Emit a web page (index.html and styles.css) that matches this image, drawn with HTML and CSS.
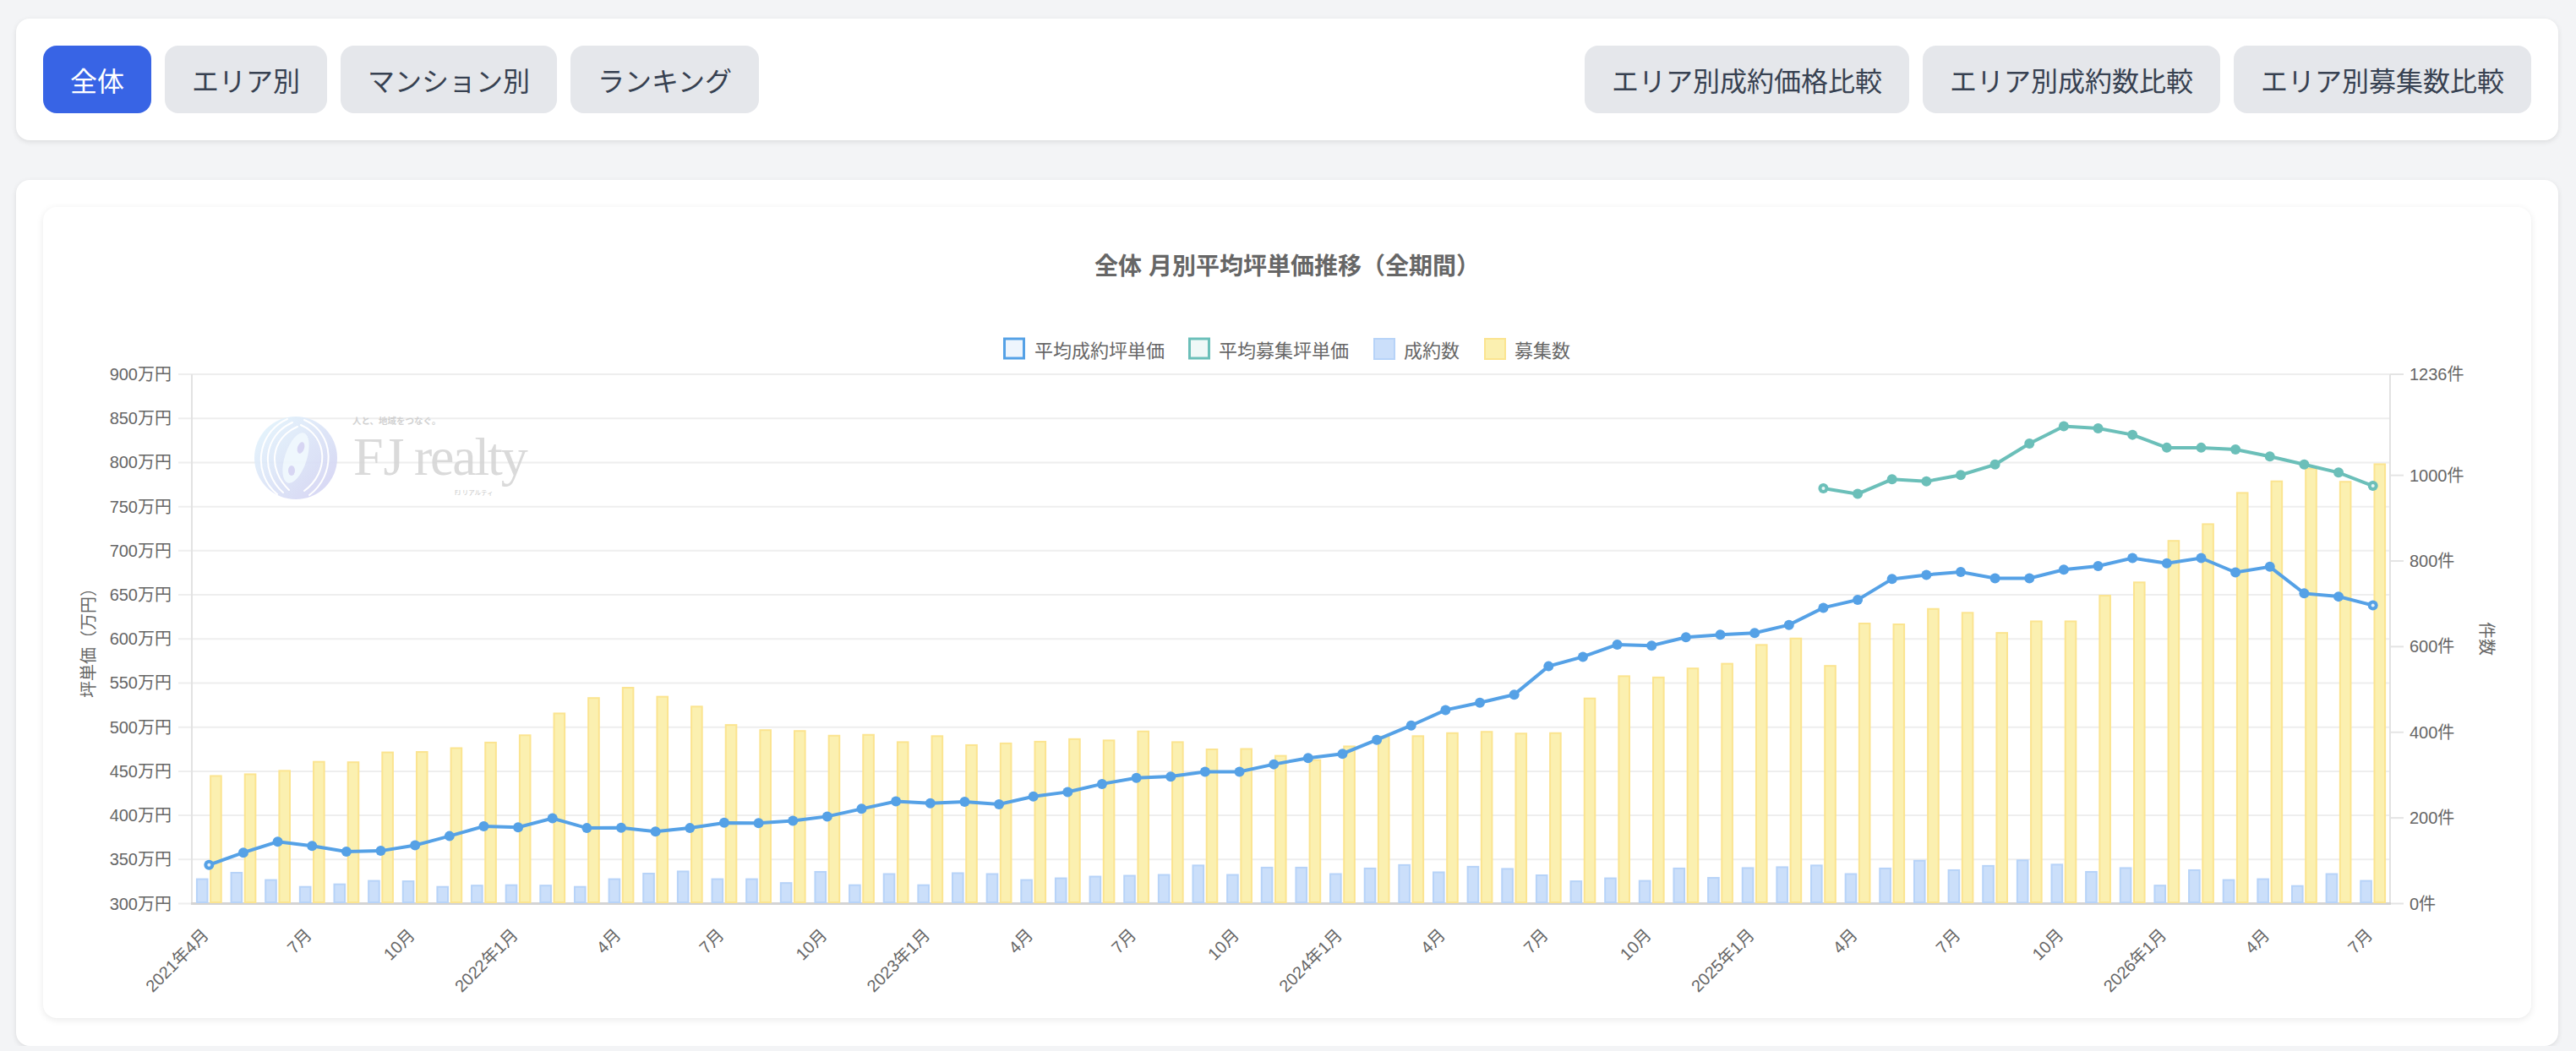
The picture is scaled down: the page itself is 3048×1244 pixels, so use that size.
FILE: index.html
```html
<!DOCTYPE html>
<html lang="ja">
<head>
<meta charset="utf-8">
<title>全体 月別平均坪単価推移（全期間）</title>
<link rel="stylesheet" href="styles.css">
</head>
<body>
<div class="page">
  <nav class="toolbar">
    <div class="btn-group">
      <button class="btn active">全体</button>
      <button class="btn">エリア別</button>
      <button class="btn">マンション別</button>
      <button class="btn">ランキング</button>
    </div>
    <div class="btn-group">
      <button class="btn">エリア別成約価格比較</button>
      <button class="btn">エリア別成約数比較</button>
      <button class="btn">エリア別募集数比較</button>
    </div>
  </nav>

  <section class="panel">
    <div class="chart-card">
      <svg id="chart" class="chart" viewBox="0 0 2944 960" xmlns="http://www.w3.org/2000/svg">
        <defs>
          <linearGradient id="logoGrad" x1="0" y1="0" x2="1" y2="1">
            <stop offset="0" stop-color="#e4f7fd"/>
            <stop offset="1" stop-color="#d2d0f2"/>
          </linearGradient>
        </defs>

        <text class="chart-title" x="1472" y="70">全体 月別平均坪単価推移（全期間）</text>

        <g class="legend">
          <rect x="1137.5" y="156" width="23" height="23" fill="#eef5fd" stroke="#55a1e6" stroke-width="3"/>
          <text class="legend-text" x="1173" y="168">平均成約坪単価</text>
          <rect x="1356.5" y="156" width="23" height="23" fill="#eff8f7" stroke="#6bbfb9" stroke-width="3"/>
          <text class="legend-text" x="1391" y="168">平均募集坪単価</text>
          <rect x="1575" y="156" width="24" height="24" fill="#cbdffa" stroke="#b7d3f8" stroke-width="2"/>
          <text class="legend-text" x="1610" y="168">成約数</text>
          <rect x="1706" y="156" width="24" height="24" fill="#fbf0b0" stroke="#fbe490" stroke-width="2"/>
          <text class="legend-text" x="1741" y="168">募集数</text>
        </g>

        <text class="axis-title" transform="translate(52 511) rotate(-90)">坪単価（万円）</text>
        <text class="axis-title" transform="translate(2892 511) rotate(90)">件数</text>

        <g id="grid"></g>

        <g class="logo" opacity="0.9">
          <g transform="translate(299 297)">
            <circle r="49" fill="url(#logoGrad)"/>
            <path d="M-22 43 C-52 18 -46 -30 -10 -46" class="logo-stroke"/>
            <path d="M-15 41 C-43 16 -38 -27 -4 -42" class="logo-stroke"/>
            <path d="M-8 38 C-34 13 -30 -23 2 -37" class="logo-stroke"/>
            <path d="M10 -45 C46 -30 48 20 16 44" class="logo-stroke"/>
            <path d="M6 -39 C38 -25 40 17 10 39" class="logo-stroke"/>
            <ellipse cx="0" cy="0" rx="13" ry="31" transform="rotate(18)" fill="#eef7fd"/>
            <ellipse cx="6" cy="-12" rx="4" ry="7" transform="rotate(18 6 -12)" fill="#d3d2f2"/>
            <ellipse cx="-5" cy="15" rx="4" ry="6" fill="#d3d2f2"/>
          </g>
          <text class="logo-tag" x="366" y="256.5">人と、地域をつなぐ。</text>
          <text class="logo-main" x="367" y="317">FJ</text>
          <text class="logo-main logo-word" x="439" y="317">realty</text>
          <text class="logo-sub" x="487" y="341">FJ リアルティ</text>
        </g>

        <g id="bars"></g>
        <g id="lines"></g>
        <g id="xlabels"></g>
      </svg>
    </div>
  </section>
</div>
<script src="script.js"></script>
</body>
</html>
```

FILE: styles.css
```css
* { box-sizing: border-box; }
html, body { margin: 0; }
body {
  background: #f3f4f6;
  font-family: "Noto Sans CJK JP", "Noto Sans", sans-serif;
}
.page { padding: 22px 21px 0 19px; }

.toolbar {
  background: #fff;
  border-radius: 16px;
  box-shadow: 0 2px 6px rgba(0, 0, 0, 0.1);
  padding: 32px;
  display: flex;
  justify-content: space-between;
}
.btn-group { display: flex; gap: 16px; }
.btn {
  height: 80px;
  padding: 0 32px;
  border: 0;
  border-radius: 16px;
  background: #e5e7eb;
  color: #374151;
  font-family: "Noto Sans CJK JP", sans-serif;
  font-size: 32px;
  line-height: 48px;
  cursor: pointer;
}
.btn.active { background: #3864e5; color: #fff; }

.panel {
  margin-top: 47px;
  background: #fff;
  border-radius: 16px;
  box-shadow: 0 2px 6px rgba(0, 0, 0, 0.1);
  padding: 32px 32px 33px;
}
.chart-card {
  background: #fff;
  border-radius: 16px;
  box-shadow: 0 2px 8px rgba(0, 0, 0, 0.09);
  overflow: hidden;
}
.chart { display: block; width: 100%; height: 960px; }

.chart-title {
  font-family: "Liberation Sans", "Noto Sans CJK JP", sans-serif;
  font-size: 28px;
  font-weight: 700;
  fill: #666;
  text-anchor: middle;
  dominant-baseline: central;
}
.legend-text {
  font-family: "Noto Sans CJK JP", sans-serif;
  font-size: 22px;
  fill: #666;
  dominant-baseline: central;
}
.axis-title {
  font-family: "Noto Sans CJK JP", sans-serif;
  font-size: 20px;
  fill: #666;
  text-anchor: middle;
  dominant-baseline: central;
}
.tick {
  font-family: "Liberation Sans", "Noto Sans CJK JP", sans-serif;
  font-size: 20px;
  fill: #666;
  dominant-baseline: central;
}
.tick-left { text-anchor: end; }
.tick-x { text-anchor: end; }

.logo-stroke { fill: none; stroke: #fff; stroke-width: 2; stroke-linecap: round; }
.logo-tag {
  font-family: "Noto Sans CJK JP", sans-serif;
  font-size: 10.5px;
  font-weight: 700;
  fill: #cdcdcd;
}
.logo-main {
  font-family: "Liberation Serif", serif;
  font-size: 64px;
  fill: #d6d6d6;
}
.logo-word { letter-spacing: -2.2px; }
.logo-sub {
  font-family: "Noto Sans CJK JP", sans-serif;
  font-size: 7.5px;
  fill: #c4c4c4;
}
```

FILE: script.js
```js
(function () {
  var NS = 'http://www.w3.org/2000/svg';
  var X0 = 176, X1 = 2777, Y0 = 198, Y1 = 824.5;
  var N = 64, STEP = (X1 - X0) / N;
  var BLUE = '#55a1e6', TEAL = '#6bbfb9';

  var price = [343.9, 357.8, 370.1, 365.3, 359.0, 359.8, 366.1, 376.5, 387.6, 386.4,
    396.7, 385.6, 386.0, 381.6, 385.6, 391.6, 391.2, 393.9, 398.7, 407.4,
    415.8, 413.8, 415.4, 412.6, 421.3, 426.5, 435.6, 442.4, 444.0, 449.5,
    449.5, 457.9, 465.0, 469.8, 485.6, 501.9, 519.4, 527.7, 536.9, 569.0,
    579.7, 593.6, 592.4, 602.0, 604.7, 606.7, 615.9, 635.3, 644.4, 667.9,
    672.6, 675.8, 668.7, 668.7, 678.6, 682.6, 691.7, 685.7, 691.7, 675.4,
    681.8, 651.6, 648.0, 638.1];
  var askStart = 47;
  var ask = [770.7, 764.4, 781.0, 778.6, 785.8, 797.7, 821.5, 841.0, 838.6, 831.4,
    816.8, 816.8, 814.8, 806.8, 797.7, 788.6, 773.5];
  var listings = [300, 304, 312, 333, 332, 355, 356, 365, 378, 395,
    446, 482, 506, 485, 462, 419, 407, 405, 394, 396,
    379, 393, 372, 376, 380, 386, 383, 404, 379, 362,
    363, 347, 337, 369, 392, 393, 400, 403, 399, 400,
    481, 533, 530, 551, 562, 606, 621, 557, 656, 654,
    690, 681, 634, 661, 661, 721, 752, 849, 888, 961,
    988, 1018, 987, 1028];
  var deals = [59, 74, 57, 41, 47, 55, 54, 41, 44, 45,
    44, 41, 59, 72, 77, 59, 59, 50, 76, 45,
    71, 45, 73, 71, 57, 61, 65, 67, 69, 91,
    69, 86, 86, 71, 84, 92, 75, 88, 83, 68,
    54, 61, 55, 84, 62, 85, 87, 91, 71, 84,
    102, 80, 90, 103, 93, 76, 85, 44, 80, 57,
    59, 43, 71, 55];

  function yL(v) { return Y1 - (v - 300) * (Y1 - Y0) / 600; }
  function yR(c) { return Y1 - c * (Y1 - Y0) / 1236; }
  function cx(i) { return X0 + STEP * (i + 0.5); }
  function el(tag, attrs, parent, text) {
    var e = document.createElementNS(NS, tag);
    for (var k in attrs) e.setAttribute(k, attrs[k]);
    if (text != null) e.textContent = text;
    parent.appendChild(e);
    return e;
  }

  var grid = document.getElementById('grid');
  for (var v = 300; v <= 900; v += 50) {
    var y = yL(v);
    el('line', { x1: 160, x2: X1, y1: y, y2: y, stroke: '#eeeeee', 'stroke-width': 2 }, grid);
    el('text', { x: 152, y: y, 'class': 'tick tick-left' }, grid, v + '万円');
  }
  [0, 200, 400, 600, 800, 1000, 1236].forEach(function (c) {
    var y = yR(c);
    el('line', { x1: X1, x2: 2793, y1: y, y2: y, stroke: '#e4e4e4', 'stroke-width': 2 }, grid);
    el('text', { x: 2800, y: y, 'class': 'tick' }, grid, c + '件');
  });
  el('line', { x1: X0, x2: X0, y1: Y0, y2: Y1, stroke: '#e2e2e2', 'stroke-width': 2 }, grid);
  el('line', { x1: X1, x2: X1, y1: Y0, y2: Y1, stroke: '#e2e2e2', 'stroke-width': 2 }, grid);
  el('line', { x1: X0 - 1, x2: X1 + 1, y1: Y1, y2: Y1, stroke: '#d4d4d4', 'stroke-width': 3 }, grid);

  var bars = document.getElementById('bars');
  var BW = 14.6;
  for (var i = 0; i < N; i++) {
    var c = cx(i);
    var yb = yR(deals[i]);
    el('rect', { x: c - 15.4 + 1, y: yb + 1, width: BW - 2, height: Y1 - yb - 2.5,
      fill: '#cbdffa', stroke: '#b7d3f8', 'stroke-width': 2 }, bars);
    var yy = yR(listings[i]);
    el('rect', { x: c + 0.8 + 1, y: yy + 1, width: BW - 2, height: Y1 - yy - 2.5,
      fill: '#fbf0b0', stroke: '#fbe490', 'stroke-width': 2 }, bars);
  }

  var lines = document.getElementById('lines');
  function series(values, start, color) {
    var pts = values.map(function (val, k) { return cx(start + k).toFixed(1) + ',' + yL(val).toFixed(1); });
    el('polyline', { points: pts.join(' '), fill: 'none', stroke: color, 'stroke-width': 4 }, lines);
    values.forEach(function (val, k) {
      el('circle', { cx: cx(start + k), cy: yL(val), r: 6, fill: color }, lines);
    });
    [0, values.length - 1].forEach(function (k) {
      el('circle', { cx: cx(start + k), cy: yL(values[k]), r: 2, fill: '#fff', opacity: 0.85 }, lines);
    });
  }
  series(price, 0, BLUE);
  series(ask, askStart, TEAL);

  var xl = document.getElementById('xlabels');
  for (var j = 0; j < N; j += 3) {
    var m = (3 + j) % 12 + 1;
    var yr = 2021 + Math.floor((3 + j) / 12);
    var label = (m === 1 || j === 0) ? yr + '年' + m + '月' : m + '月';
    var ax = cx(j) - 4, ay = 858;
    el('text', { x: ax, y: ay, 'class': 'tick tick-x',
      transform: 'rotate(-45 ' + ax.toFixed(1) + ' ' + ay + ')' }, xl, label);
  }
})();
```
